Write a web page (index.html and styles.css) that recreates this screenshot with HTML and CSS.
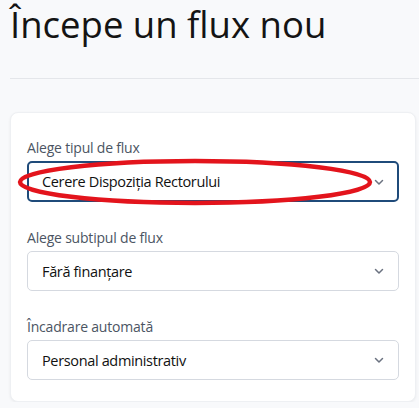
FILE: index.html
```html
<!DOCTYPE html>
<html lang="ro">
<head>
  <meta charset="UTF-8" />
  <meta name="viewport" content="width=device-width, initial-scale=1.0"/>
  <title>Începe un flux nou</title>
  <link rel="stylesheet" href="styles.css">
</head>
<body>

  <div class="page">
    <h1 class="title">Începe un flux nou</h1>
    <hr class="divider">

    <div class="card">
      <div class="field">
        <label class="label">Alege tipul de flux</label>
        <div class="select active">
          <span>Cerere Dispoziția Rectorului</span>
          <svg class="chevron" width="12" height="12" viewBox="0 0 12 12"><path d="M2.5 4.5 6 8 9.5 4.5" /></svg>
        </div>
        <svg class="mark" width="360" height="50" viewBox="0 0 360 50"><ellipse cx="178" cy="24" rx="175" ry="21" /></svg>
      </div>

      <div class="field">
        <label class="label">Alege subtipul de flux</label>
        <div class="select">
          <span>Fără finanțare</span>
          <svg class="chevron" width="12" height="12" viewBox="0 0 12 12"><path d="M2.5 4.5 6 8 9.5 4.5" /></svg>
        </div>
      </div>

      <div class="field">
        <label class="label">Încadrare automată</label>
        <div class="select">
          <span>Personal administrativ</span>
          <svg class="chevron" width="12" height="12" viewBox="0 0 12 12"><path d="M2.5 4.5 6 8 9.5 4.5" /></svg>
        </div>
      </div>
    </div>
  </div>

</body>
</html>
```

FILE: styles.css
```css
body { margin: 0; background: #f8f9fb; font-family: "Open Sans", "Noto Sans", sans-serif; color: #111; }
.page { padding: 3px 0 0 10px; }
.title { margin: 0; font-size: 36.5px; font-weight: 400; line-height: 43px; color: #141414; }
.divider { margin: 32px 0 33px; border: 0; border-top: 1px solid #e4e6ea; }

.card {
  margin-right: 3px;
  padding: 25px 16px 21px;
  background: #fff;
  border: 1px solid #eef0f3;
  border-radius: 8px;
  box-shadow: 0 1px 3px rgba(0, 0, 0, 0.06);
}
.field { position: relative; display: flex; flex-direction: column; gap: 3px; }
.field + .field { margin-top: 26px; }
.label { font-size: 14px; line-height: 20px; letter-spacing: -0.2px; color: #4b5563; }

.select {
  display: flex;
  align-items: center;
  justify-content: space-between;
  height: 40px;
  box-sizing: border-box;
  padding: 0 13px 0 14px;
  border: 1px solid #d5d9e0;
  border-radius: 5px;
  font-size: 14.5px;
  letter-spacing: -0.35px;
  color: #111;
}
.select.active { height: 41px; border: 2px solid #1f4b7a; padding-left: 13px; padding-right: 12px; }
.chevron path { fill: none; stroke: #6b7280; stroke-width: 1.5; stroke-linecap: round; stroke-linejoin: round; }

.mark { position: absolute; left: -10px; top: 20px; }
.mark ellipse { fill: none; stroke: #e3141c; stroke-width: 4.5; }
```
